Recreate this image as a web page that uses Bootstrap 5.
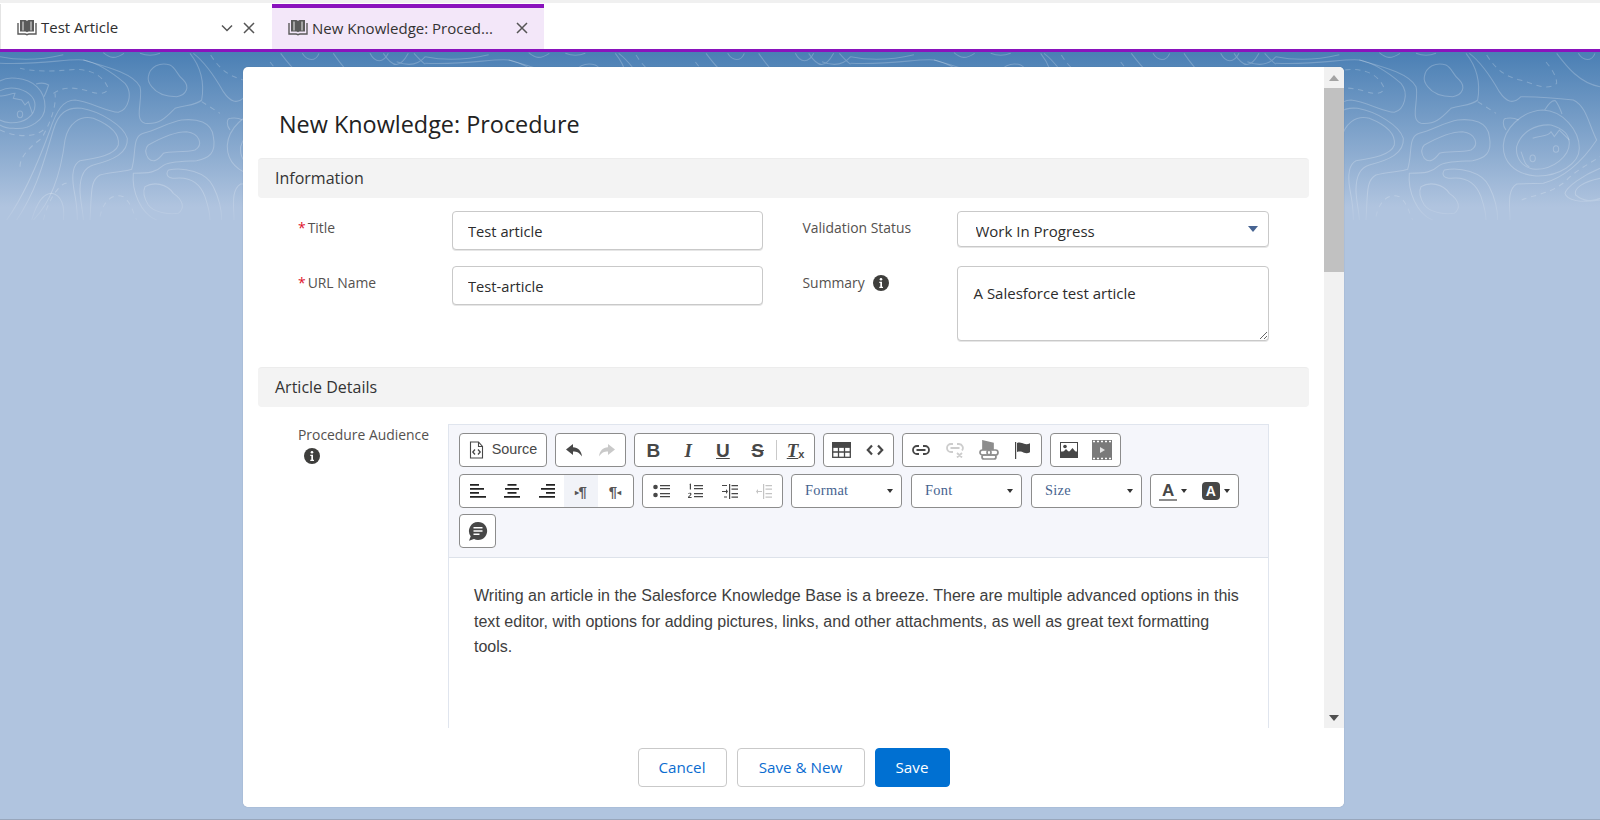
<!DOCTYPE html>
<html lang="en">
<head>
<meta charset="UTF-8" />
<meta name="viewport" content="width=device-width, initial-scale=1.0" />
<title>New Knowledge: Procedure</title>
<link href="https://cdn.jsdelivr.net/npm/bootstrap@5.3.3/dist/css/bootstrap.min.css" rel="stylesheet" />
<style>
  html, body { height: 820px; overflow: hidden; }
  body {
    font-family: "Open Sans", "Noto Sans", sans-serif;
    background: #b0c4df;
    color: #333;
    position: relative;
    border-bottom: 1px solid #98a6bb;
  }
  .bg-band { position: absolute; left: 0; right: 0; top: 52px; height: 155px; background: linear-gradient(#4a7fb4, #b0c4df); }
  .bg-lines {
    position: absolute; left: 0; top: 50px; width: 1600px; height: 190px;
    fill: none; stroke: #fff; stroke-opacity: .22; stroke-width: 3.2;
    -webkit-mask-image: linear-gradient(#000 75%, transparent 96%);
    mask-image: linear-gradient(#000 75%, transparent 96%);
  }
  .dash { stroke-dasharray: 16 14; }

  .tab-strip { position: relative; height: 52px; padding-top: 4px; background: #fff; border-bottom: 3px solid #8a13bd; box-shadow: inset 0 3px 0 #f0f0f0; }
  .tab-item { width: 272px; height: 45px; font-size: 15px; color: #2f2f2f; gap: 4px; padding: 2px 0 0 16px; border-left: 1px solid #e4e4e4; }
  .tab-item.active-tab { background: #f3e7f9; border-top: 4px solid #8a13bd; border-left: 0; padding: 0 0 1px 16px; color: #333; }
  .tab-title { flex: 1 1 auto; white-space: nowrap; }
  .tab-ctl { color: #555; margin-right: 17px; display: block; }
  .tab-ctl.first { margin-right: 5px; }
  .active-tab .tab-ctl { margin-right: 16px; }

  .form-shell {
    position: relative; width: 1101px; height: 740px; margin: 15px 0 0 243px;
    border: 0; border-radius: 5px; background: #fff; overflow: hidden;
    box-shadow: 0 0 1px rgba(70,90,120,.5);
  }
  .form-scroll { height: 661px; overflow: hidden; }
  .form-main { width: 1081px; padding: 0 15px; overflow: hidden; }
  .fake-scroll { width: 20px; background: #f1f1f1; }
  .sb-arrow { height: 21px; }
  .sb-thumb { height: 184px; background: #c1c1c1; }
  .page-title { height: 91px; padding: 0 0 20px 21px; font-size: 23.4px; color: #222; margin: 0; font-weight: 400; }
  .sec-head { height: 40px; line-height: 39px; background: #f3f3f3; border-top: 1px solid #ececec; border-radius: 4px; padding-left: 17px; font-size: 16px; color: #333; }
  .sec-gap { margin-top: 26px; }

  .pane-a { padding: 13px 0 0 40px; width: 548px; }
  .pane-b { padding-top: 13px; width: 510px; }
  .field-line { display: flex; }
  .field-line.sel-line { margin-bottom: 19px; }
  .field-lbl { width: 154px; flex: none; font-size: 13.9px; color: #54514f; padding-top: 7px; line-height: 20px; }
  .req { color: #e0112b; margin-right: 2px; }
  .sf-input.form-control, .sf-input.form-select {
    width: 311px; height: 39px; flex: none; border: 1px solid #c9c9c9; border-radius: 4px;
    font-size: 14.7px; color: #2c2c2c; padding: 6px 15px; box-shadow: 0 1px 0 #e6e6e6;
  }
  .sf-input.form-select {
    height: 36px; padding: 6px 15px 2px 18px; width: 312px; font-size: 15px;
    background-image: url("data:image/svg+xml,%3Csvg xmlns='http://www.w3.org/2000/svg' viewBox='0 0 10 6'%3E%3Cpath d='M0 0h10L5 6z' fill='%23476492'/%3E%3C/svg%3E");
    background-size: 10px 6px; background-position: right 10px center;
  }
  .sf-input.sf-area { height: 75px; width: 312px; padding: 15px 16px; font-size: 15px; resize: vertical; }

  .detail-row { display: flex; padding-top: 17px; }
  .audience { width: 190px; padding: 1px 0 0 40px; font-size: 13.9px; color: #54514f; flex: none; line-height: 20px; }
  .info-dot { display: block; }
  .info-low { margin: 3px 0 0 6px; }
  .rte { width: 821px; border: 1px solid #e0e5ee; border-bottom: 0; flex: none; }
  .rte-bar { height: 133px; background: #f5f6fb; border-bottom: 1px solid #dde2ea; padding: 8px 0 0 10px; }
  .bar-row { display: flex; gap: 8px; margin-bottom: 7px; height: 34px; }
  .bar-row.tight { margin-bottom: 6px; }
  .tb-grp { display: flex; flex: none; height: 34px; background: #fff; border: 1px solid #8c8c8c; border-radius: 4px; align-items: center; justify-content: space-around; padding: 0 1px; }
  .g37 { width: 37px; } .g71 { width: 71px; } .g88 { width: 88px; } .g89 { width: 89px; }
  .g140 { width: 140px; } .g141 { width: 141px; } .g175 { width: 175px; } .g181 { width: 181px; }
  .tb-btn { width: 34.6px; height: 32px; display: flex; align-items: center; justify-content: center; color: #474747; font-family: "Liberation Sans", Arial, sans-serif; }
  .tb-btn.hov { background: #f1f3f8; }
  .tb-t { font-size: 19px; font-weight: 700; line-height: 1; }
  .tb-serif { font-family: "Liberation Serif", serif; }
  .tb-sub { font-size: 11px; font-weight: 700; margin-top: 8px; }
  .tb-sep { width: 1px; height: 20px; background: #c9c9c9; margin: 0 1px; }
  .src-label { font-family: "Liberation Sans", Arial, sans-serif; font-size: 14.4px; color: #474747; }
  .para-mark { font-size: 15px; font-weight: 700; color: #555; line-height: 1; }
  .para-dir { font-size: 8px; vertical-align: 2px; }
  .combo { display: flex; flex: none; width: 111px; align-items: center; justify-content: space-between; height: 34px; background: #fff; border: 1px solid #8c8c8c; border-radius: 4px; padding: 0 8px 0 13px; font-family: "Liberation Serif", serif; font-size: 14.4px; letter-spacing: .3px; color: #46638f; }
  .combo.nudge { margin-left: 1px; }
  .caret-dn { width: 0; height: 0; border: 3.5px solid transparent; border-top: 4px solid #333; border-bottom: 0; display: block; flex: none; }
  .color-a { font-family: "Liberation Sans", sans-serif; color: #474747; font-size: 17px; }
  .color-rule { display: block; width: 18px; height: 2px; background: #8c8c8c; }
  .color-box { width: 18px; height: 18px; background: #474747; color: #fff; font: 700 14px "Liberation Sans", sans-serif; }
  .rte-text { padding: 25px 24px 0 25px; font-family: "Liberation Sans", Arial, sans-serif; font-size: 16.05px; line-height: 25.5px; color: #3e3e3e; height: 300px; }

  .form-foot { height: 79px; gap: 10px; padding-top: 20px; background: #fff; border: 0; }
  .foot-btn { height: 39px; font-size: 15.2px; border-radius: 4px; padding: 0; }
  .foot-plain { background: #fff; border: 1px solid #c9c9c9; color: #0b6cd0; }
  .foot-save { background: #0070d2; border: 1px solid #0070d2; color: #fff; }
  .w-cancel { width: 89px; } .w-savenew { width: 128px; } .w-save { width: 75px; }
</style>
</head>
<body>

<div class="bg-band"></div>
<svg class="bg-lines" viewBox="0 0 4800 570" aria-hidden="true">
  <defs>
    <g id="tile">
      <path d="M445 80C450 50 480 35 510 45C530 55 530 75 550 90C570 110 560 135 530 140C500 140 470 130 455 110C447 100 443 90 445 80Z"/>
      <path d="M20 510C70 440 110 350 150 240C170 180 190 150 225 150C270 155 320 185 355 187C385 180 400 130 375 100C340 70 300 40 250 30C200 25 130 45 0 40"/>
      <path d="M50 510C110 420 130 340 160 240C175 190 200 170 245 175C300 185 370 225 382 265C385 310 340 330 280 345C245 355 240 390 240 420C240 450 250 490 250 510"/>
      <path d="M100 510C160 450 185 350 195 270C205 220 240 195 280 205C330 225 360 250 355 285C345 315 290 325 240 332C215 345 215 380 222 420C230 460 232 480 232 510"/>
      <path d="M0 20C60 32 130 28 190 14M310 8C330 25 345 28 372 10M420 10C440 18 460 18 480 10"/>
      <path d="M250 30C320 50 400 70 420 110C430 150 400 210 435 220C480 225 500 200 525 175C560 165 590 165 605 150C612 110 610 60 570 10"/>
      <path d="M270 510C275 430 270 390 300 375C340 365 380 365 395 358C410 310 395 260 430 250C470 240 510 215 545 210C590 205 635 215 640 260C650 310 625 325 590 332C540 335 500 335 485 350C470 365 450 370 400 370C395 420 420 490 470 510"/>
      <path d="M445 285C480 265 520 245 560 245C600 250 610 285 585 300C550 310 510 300 490 310C475 330 460 340 445 325C435 310 435 295 445 285Z"/>
      <path d="M505 360C550 350 620 365 640 410C660 450 665 480 665 510M505 360C495 375 505 385 525 385C570 380 600 400 615 440C625 470 630 490 630 510"/>
      <path d="M435 410C460 395 500 400 520 430C550 450 555 475 535 490C500 495 460 485 445 465C430 440 430 420 435 410Z"/>
      <path d="M95 510C110 460 130 430 155 430C185 435 195 470 190 510"/>
      <path d="M580 10C620 40 650 90 670 125C690 155 710 165 735 140C800 140 850 145 892 150C932 170 937 220 962 270C922 330 872 380 802 400L722 402C692 420 702 470 702 510"/>
      <path class="dash" d="M0 240C40 260 100 265 130 240M160 130C190 110 220 110 270 125C300 135 320 130 325 115C310 80 280 60 230 58C190 60 130 70 60 55"/>
      <path class="dash" d="M60 350C60 320 90 290 125 265C150 220 170 170 165 130M605 155L660 190M632 15C660 60 690 80 732 90C772 100 812 125 842 100C842 70 812 40 802 25"/>
      <path class="dash" d="M130 510C150 430 190 395 200 400M300 500C310 450 340 430 370 440C395 460 400 490 410 510M737 450C772 435 832 430 872 390C902 360 942 340 972 320"/>
      <path d="M842 10C872 50 912 100 972 110M907 10C922 35 947 35 957 10M972 355C922 375 872 410 867 430C872 450 912 460 972 450M972 385C922 395 892 415 899 435C922 455 952 455 972 445"/>
      <path d="M135 170C135 210 90 240 40 235C0 235 -30 210 -40 170C-40 110 0 78 50 85C100 90 135 120 135 170Z"/>
      <path d="M105 165C105 200 70 220 30 218C-10 215 -30 190 -30 160C-25 130 10 110 45 115C80 120 105 140 105 165Z"/>
      <path d="M108 102C122 98 138 100 146 105C141 120 136 132 132 140M-10 135C10 145 30 130 45 130L40 145L65 150L75 165L85 155L97 190"/>
      <ellipse cx="60" cy="193" rx="8" ry="10"/>
      <path d="M910 295C910 340 850 380 780 378C710 372 680 330 682 285C685 240 730 185 800 180C860 182 910 240 910 295Z"/>
      <path d="M880 280C880 320 830 358 780 358C740 355 718 325 722 290C735 245 780 222 825 225C860 235 880 255 880 280Z"/>
      <path d="M690 240C678 225 680 205 692 205C705 203 718 205 728 210M806 180C815 165 828 150 838 152C848 165 852 175 858 192M770 265C790 255 815 262 825 245L835 260L850 240L880 270M735 305C745 330 745 345 760 350"/>
      <ellipse cx="770" cy="325" rx="8" ry="10"/>
      <ellipse cx="840" cy="297" rx="8" ry="10"/>
      <path d="M1000 10C1020 40 1040 60 1060 90M1110 10C1125 40 1150 40 1165 10M1150 10C1180 55 1200 55 1225 10M1242 10C1260 30 1270 40 1276 42M1190 35C1215 45 1250 50 1276 20"/>
    </g>
  </defs>
  <use href="#tile" />
  <use href="#tile" x="1276" />
  <use href="#tile" x="2552" />
  <use href="#tile" x="3828" />
</svg>

<header class="tab-strip d-flex">
  <div class="tab-item d-flex align-items-center">
    <svg width="20" height="18" viewBox="0 0 20 18" fill="#5a5a5a"><path d="M3 1h5.200c.7 0 1.300.4 1.800 1 .5-.6 1.100-1 1.800-1H17v11.500h-5.200c-.7 0-1.300.3-1.800.8-.5-.5-1.100-.8-1.800-.8H3z"/><path d="M1 4v11h7c.8 0 1.400.3 2 .8.6-.5 1.200-.8 2-.8h7V4" fill="none" stroke="#5a5a5a" stroke-width="1.400"/><path d="M6 2.500v9M14 2.500v9" stroke="#fff" stroke-width=".9"/></svg>
    <span class="tab-title">Test Article</span>
    <svg class="tab-ctl first" width="14" height="14" viewBox="0 0 14 14" fill="none" stroke="#555" stroke-width="1.500"><path d="M2 4.500l5 5 5-5"/></svg>
    <svg class="tab-ctl" width="12" height="12" viewBox="0 0 12 12" fill="none" stroke="#555" stroke-width="1.500"><path d="M1 1l10 10M11 1L1 11"/></svg>
  </div>
  <div class="tab-item active-tab d-flex align-items-center">
    <svg width="20" height="18" viewBox="0 0 20 18" fill="#5a5a5a"><path d="M3 1h5.200c.7 0 1.300.4 1.800 1 .5-.6 1.100-1 1.800-1H17v11.500h-5.200c-.7 0-1.300.3-1.800.8-.5-.5-1.100-.8-1.800-.8H3z"/><path d="M1 4v11h7c.8 0 1.400.3 2 .8.6-.5 1.200-.8 2-.8h7V4" fill="none" stroke="#5a5a5a" stroke-width="1.400"/><path d="M6 2.500v9M14 2.500v9" stroke="#fff" stroke-width=".9"/></svg>
    <span class="tab-title">New Knowledge: Proced...</span>
    <svg class="tab-ctl" width="12" height="12" viewBox="0 0 12 12" fill="none" stroke="#555" stroke-width="1.500"><path d="M1 1l10 10M11 1L1 11"/></svg>
  </div>
</header>

<main class="card form-shell">
  <div class="form-scroll d-flex">
    <div class="form-main">
      <h1 class="page-title d-flex align-items-end">New Knowledge: Procedure</h1>
      <div class="sec-head">Information</div>

      <div class="d-flex">
        <div class="pane-a d-flex flex-column gap-3">
          <div class="field-line">
            <label class="field-lbl"><span class="req">*</span>Title</label>
            <input class="form-control sf-input" value="Test article" />
          </div>
          <div class="field-line">
            <label class="field-lbl"><span class="req">*</span>URL Name</label>
            <input class="form-control sf-input" value="Test-article" />
          </div>
        </div>
        <div class="pane-b d-flex flex-column">
          <div class="field-line sel-line">
            <label class="field-lbl">Validation Status</label>
            <select class="form-select sf-input"><option>Work In Progress</option></select>
          </div>
          <div class="field-line">
            <label class="field-lbl d-flex align-items-start gap-2">Summary
              <svg class="info-dot" width="16" height="20" viewBox="0 0 16 20"><circle cx="8" cy="10" r="8" fill="#3e3e3c"/><circle cx="8" cy="6.300" r="1.300" fill="#fff"/><path d="M6.300 8.700h2.700v5h1v1.200H6.300v-1.200h1v-3.800h-1z" fill="#fff"/></svg>
            </label>
            <textarea class="form-control sf-input sf-area">A Salesforce test article</textarea>
          </div>
        </div>
      </div>

      <div class="sec-head sec-gap">Article Details</div>

      <div class="detail-row">
        <div class="audience">Procedure Audience
          <svg class="info-dot info-low" width="16" height="16" viewBox="0 0 16 16"><circle cx="8" cy="8" r="8" fill="#3e3e3c"/><circle cx="8" cy="4.300" r="1.300" fill="#fff"/><path d="M6.300 6.700h2.700v5h1v1.200H6.300v-1.200h1V7.900h-1z" fill="#fff"/></svg>
        </div>
        <div class="rte">
          <div class="rte-bar">
            <div class="bar-row">
              <div class="tb-grp g88">
                <span class="d-flex align-items-center gap-2">
                  <svg width="15" height="18" viewBox="0 0 15 18" fill="none" stroke="#474747" stroke-width="1.100"><path d="M1.500 1h8l4 4.500V17h-12zM9.500 1v4.500h4"/><path d="M6 8.500L3.800 11 6 13.500M9 8.500l2.200 2.500L9 13.500" stroke-width="1.300"/></svg>
                  <span class="src-label">Source</span>
                </span>
              </div>
              <div class="tb-grp g71">
                <span class="tb-btn"><svg width="18" height="14" viewBox="0 0 18 14" fill="#474747"><path d="M8 1L1 6.500 8 12V8.500c4 0 6.500 1.300 9 5C16.500 8 13 4.500 8 4.300z"/></svg></span>
                <span class="tb-btn"><svg width="18" height="14" viewBox="0 0 18 14" fill="#c9c9c9"><path d="M10 1l7 5.500L10 12V8.500c-4 0-6.500 1.300-9 5C1.500 8 5 4.500 10 4.300z"/></svg></span>
              </div>
              <div class="tb-grp g181">
                <span class="tb-btn"><span class="tb-t">B</span></span>
                <span class="tb-btn"><span class="tb-t tb-serif fst-italic">I</span></span>
                <span class="tb-btn"><span class="tb-t text-decoration-underline">U</span></span>
                <span class="tb-btn"><span class="tb-t text-decoration-line-through">S</span></span>
                <span class="tb-sep"></span>
                <span class="tb-btn"><span class="tb-t tb-serif fst-italic text-decoration-underline">T</span><span class="tb-sub">x</span></span>
              </div>
              <div class="tb-grp g71">
                <span class="tb-btn"><svg width="19" height="16" viewBox="0 0 19 16" fill="none" stroke="#474747" stroke-width="1.300"><rect x=".7" y=".7" width="17.600" height="14.600"/><rect x=".7" y=".7" width="17.600" height="4.500" fill="#474747"/><path d="M.7 10h17.600M6.500 5v10M12.500 5v10"/></svg></span>
                <span class="tb-btn"><svg width="18" height="12" viewBox="0 0 18 12" fill="none" stroke="#474747" stroke-width="2.200"><path d="M6 1.500L1.800 6 6 10.500M12 1.500L16.200 6 12 10.500"/></svg></span>
              </div>
              <div class="tb-grp g140">
                <span class="tb-btn"><svg width="18" height="10" viewBox="0 0 18 10" fill="none" stroke="#474747" stroke-width="1.800"><path d="M7 1H5a4 4 0 0 0 0 8h2M11 1h2a4 4 0 0 1 0 8h-2M4.500 5h9"/></svg></span>
                <span class="tb-btn"><svg width="18" height="15" viewBox="0 0 18 15" fill="none" stroke="#cdcdcd" stroke-width="1.800"><path d="M7 1H5a4 4 0 0 0 0 8h2M11 1h2a4 4 0 0 1 3 6.500M4.500 5h9M11 10l5 4.500M16 10l-5 4.500"/></svg></span>
                <span class="tb-btn"><svg width="20" height="20" viewBox="0 0 20 20" fill="none" stroke="#8d8d8d" stroke-width="1.700"><path d="M4 1l10 2.500v6H4z" fill="#8d8d8d"/><rect x="1" y="10" width="11" height="5" rx="2.500"/><rect x="8" y="10" width="11" height="5" rx="2.500"/><rect x="3" y="15" width="14" height="4" rx="2"/></svg></span>
                <span class="tb-btn"><svg width="18" height="19" viewBox="0 0 18 19" fill="#474747"><path d="M1 1h1.200v17H1z"/><path d="M3 2c3-1.200 5 0 7 .8 2 .7 4 .5 6-.5v9c-2 1-4 1.200-6 .4-2-.8-4-1.700-7-.6z"/></svg></span>
              </div>
              <div class="tb-grp g71">
                <span class="tb-btn"><svg width="18" height="16" viewBox="0 0 18 16"><rect width="18" height="16" fill="#474747"/><rect x="1" y="1" width="16" height="8.500" fill="#fff"/><circle cx="5" cy="4.500" r="1.800" fill="#474747"/><path d="M1 12l5-5 3 3 3.500-4 4.500 5.500V15H1z" fill="#474747"/></svg></span>
                <span class="tb-btn"><svg width="20" height="20" viewBox="0 0 20 20"><rect width="20" height="20" fill="#7a7a7a"/><path d="M1 1.500h2M5 1.500h2M9 1.500h2M13 1.500h2M17 1.500h2M1 18.500h2M5 18.500h2M9 18.500h2M13 18.500h2M17 18.500h2" stroke="#fff" stroke-width="1.400"/><path d="M8 7l5 3-5 3z" fill="#e4e4e4"/></svg></span>
              </div>
            </div>
            <div class="bar-row tight">
              <div class="tb-grp g175">
                <span class="tb-btn"><svg width="16" height="14" viewBox="0 0 16 14" fill="#222"><path d="M0 0h9v1.800H0zM0 4h14v1.800H0zM0 8h9v1.800H0zM0 12h16v1.800H0z"/></svg></span>
                <span class="tb-btn"><svg width="16" height="14" viewBox="0 0 16 14" fill="#222"><path d="M3.500 0h9v1.800h-9zM1 4h14v1.800H1zM3.500 8h9v1.800h-9zM0 12h16v1.800H0z"/></svg></span>
                <span class="tb-btn"><svg width="16" height="14" viewBox="0 0 16 14" fill="#222"><path d="M7 0h9v1.800H7zM2 4h14v1.800H2zM7 8h9v1.800H7zM0 12h16v1.800H0z"/></svg></span>
                <span class="tb-btn hov"><span class="para-mark"><span class="para-dir">&#9656;</span>&para;</span></span>
                <span class="tb-btn"><span class="para-mark">&para;<span class="para-dir">&#9666;</span></span></span>
              </div>
              <div class="tb-grp g141">
                <span class="tb-btn"><svg width="17" height="14" viewBox="0 0 17 14" fill="#474747"><circle cx="2.500" cy="3" r="2.300"/><circle cx="2.500" cy="11" r="2.300"/><path d="M7 1h10v1.300H7zM7 4h10v1.300H7zM7 9h10v1.300H7zM7 12h10v1.300H7z"/></svg></span>
                <span class="tb-btn"><svg width="16" height="16" viewBox="0 0 16 16" fill="#474747"><path d="M2.500 1L4 .5v6H2.800V2zM1 10.500c1-1.200 3.500-1 3.500.6 0 1.200-1.400 1.800-2.300 2.900h2.400v1H1v-.9c1-1.300 2.300-2 2.300-3 0-.7-1-.7-1.800-.1zM7 2h9v1.300H7zM7 5h9v1.300H7zM7 10h9v1.300H7zM7 13h9v1.300H7z"/></svg></span>
                <span class="tb-btn"><svg width="17" height="15" viewBox="0 0 17 15" fill="#474747"><path d="M8 0h1.200v15H8zM10.500 1H17v1.200h-6.500zM10.500 4.500H17v1.200h-6.500zM10.500 9H17v1.200h-6.500zM10.500 12.500H17v1.200h-6.500zM1 7h4V5l2 2.500L5 10V8H1z"/><path d="M1 1h5v1H1zM3 12.500h3v1H3z"/></svg></span>
                <span class="tb-btn"><svg width="17" height="15" viewBox="0 0 17 15" fill="#c4c4c4"><path d="M8 0h1.200v15H8zM10.500 1H17v1.200h-6.500zM10.500 4.500H17v1.200h-6.500zM10.500 9H17v1.200h-6.500zM10.500 12.500H17v1.200h-6.500zM7 7H3V5L1 7.500 3 10V8h4z"/></svg></span>
              </div>
              <div class="combo"><span>Format</span><span class="caret-dn"></span></div>
              <div class="combo nudge"><span>Font</span><span class="caret-dn"></span></div>
              <div class="combo nudge"><span>Size</span><span class="caret-dn"></span></div>
              <div class="tb-grp g89">
                <span class="d-flex align-items-center gap-1">
                  <span class="d-flex flex-column align-items-center"><span class="tb-t color-a">A</span><span class="color-rule"></span></span>
                  <span class="caret-dn"></span>
                </span>
                <span class="d-flex align-items-center gap-1">
                  <span class="d-flex align-items-center justify-content-center rounded-1 color-box">A</span>
                  <span class="caret-dn"></span>
                </span>
              </div>
            </div>
            <div class="bar-row">
              <div class="tb-grp g37">
                <svg width="20" height="19" viewBox="0 0 20 19"><path d="M10 0a9 9 0 1 1-4 17l-5 1.800 1.700-4.500A9 9 0 0 1 10 0z" fill="#474747"/><path d="M5.500 5.800h9M5.500 9h9M5.500 12.200h6" stroke="#fff" stroke-width="1.400"/></svg>
              </div>
            </div>
          </div>
          <div class="rte-text">Writing an article in the Salesforce Knowledge Base is a breeze. There are multiple advanced options in this text editor, with options for adding pictures, links, and other attachments, as well as great text formatting tools.</div>
        </div>
      </div>
    </div>

    <div class="fake-scroll d-flex flex-column">
      <div class="sb-arrow d-flex align-items-center justify-content-center"><svg width="10" height="6" viewBox="0 0 10 6"><path d="M0 6h10L5 0z" fill="#a3a3a3"/></svg></div>
      <div class="sb-thumb"></div>
      <div class="flex-grow-1"></div>
      <div class="sb-arrow d-flex align-items-center justify-content-center"><svg width="10" height="6" viewBox="0 0 10 6"><path d="M0 0h10L5 6z" fill="#505050"/></svg></div>
    </div>
  </div>

  <div class="card-footer form-foot d-flex justify-content-center align-items-start">
    <button class="btn foot-btn foot-plain w-cancel">Cancel</button>
    <button class="btn foot-btn foot-plain w-savenew">Save &amp; New</button>
    <button class="btn foot-btn foot-save w-save">Save</button>
  </div>
</main>

<script src="https://cdn.jsdelivr.net/npm/bootstrap@5.3.3/dist/js/bootstrap.bundle.min.js"></script>
</body>
</html>
